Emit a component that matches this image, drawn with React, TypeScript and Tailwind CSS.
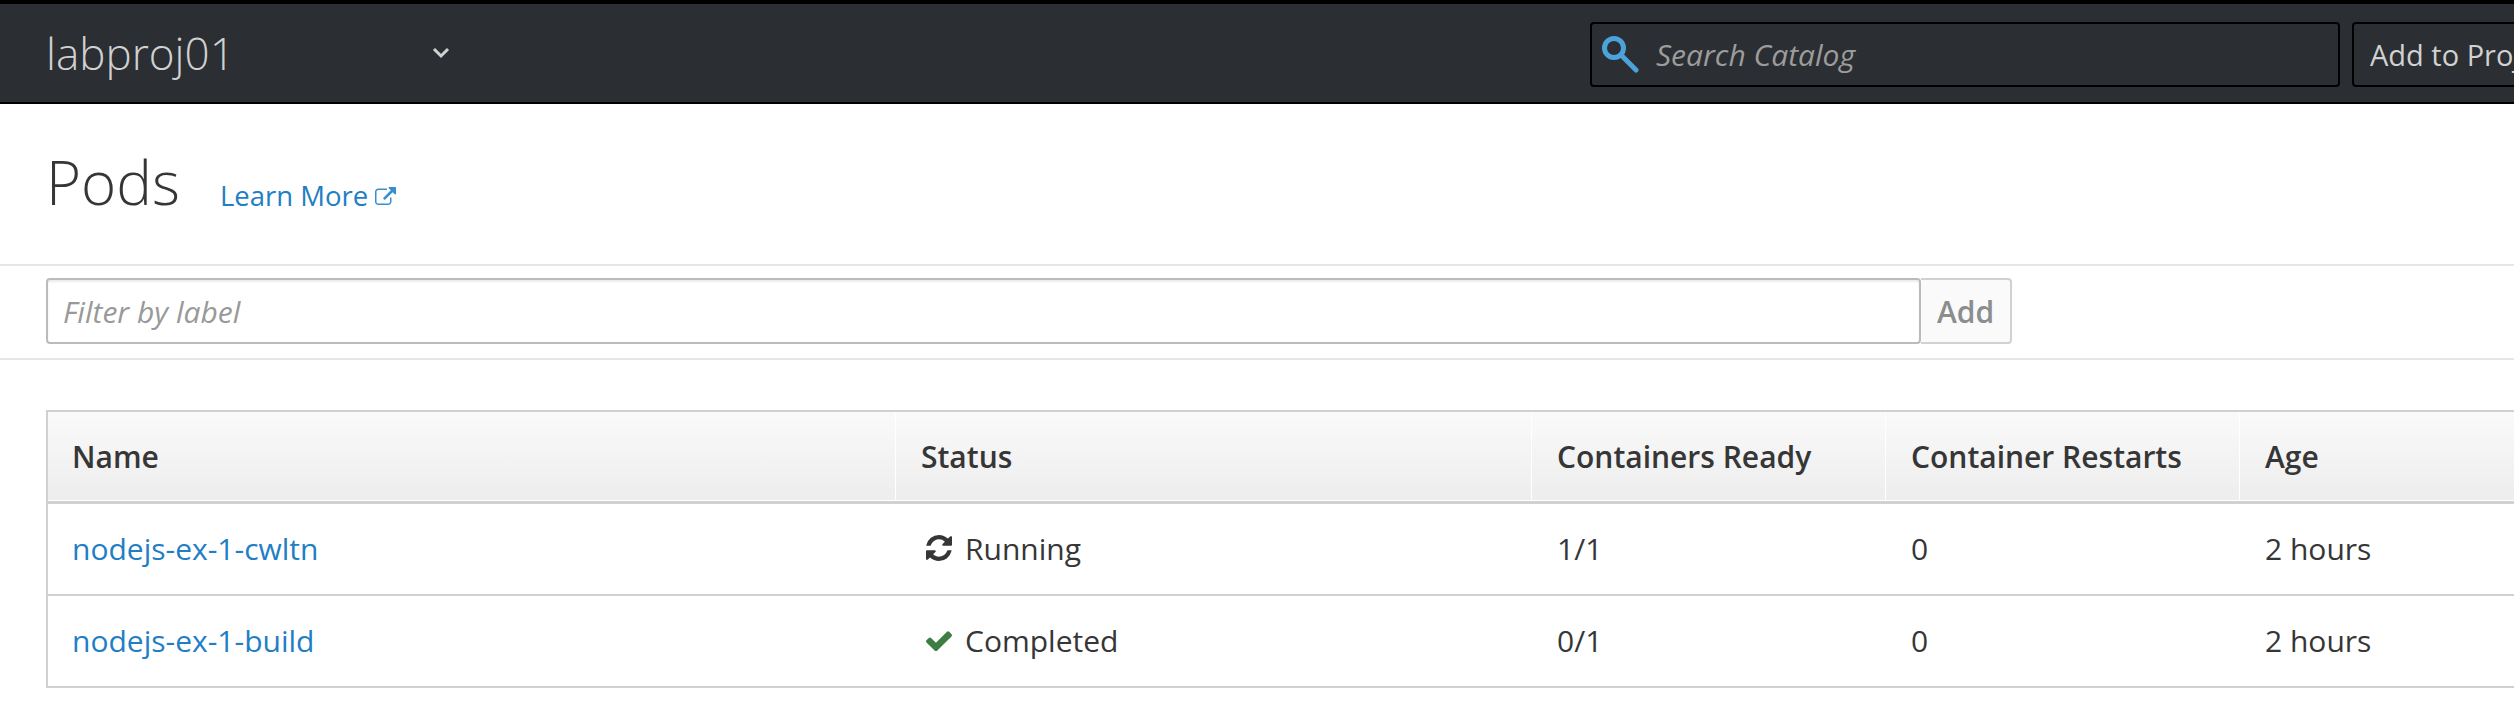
const pods = [
  { name: 'nodejs-ex-1-cwltn', status: 'Running', ready: '1/1', restarts: '0', age: '2 hours' },
  { name: 'nodejs-ex-1-build', status: 'Completed', ready: '0/1', restarts: '0', age: '2 hours' },
];

function HeaderCell({ label, first }: { label: string; first?: boolean }) {
  return (
    <div className={`flex items-center ${first ? 'pl-[24px]' : 'border-l border-white pl-[25px]'}`}>
      <span className="whitespace-nowrap text-[30px] font-semibold text-[#363636]">{label}</span>
    </div>
  );
}

function RefreshIcon() {
  return (
    <svg viewBox="0 0 1536 1536" className="mr-[13px] h-[26px] w-[26px] fill-[#363636]">
      <path d="M1511 928q0 5-1 7-64 268-268 434.5t-478 166.5q-146 0-282.5-55t-243.5-157l-129 129q-19 19-45 19t-45-19-19-45v-448q0-26 19-45t45-19h448q26 0 45 19t19 45-19 45l-137 137q71 66 161 102t187 36q134 0 250-65t186-179q11-17 53-117 8-23 30-23h192q13 0 22.5 9.5t9.5 22.5zm25-800v448q0 26-19 45t-45 19h-448q-26 0-45-19t-19-45 19-45l138-138q-148-137-349-137-134 0-250 65t-186 179q-11 17-53 117-8 23-30 23h-199q-13 0-22.5-9.5t-9.5-22.5v-7q65-268 270-434.5t480-166.5q146 0 284 55.5t245 156.5l130-129q19-19 45-19t45 19 19 45z" />
    </svg>
  );
}

function CheckIcon() {
  return (
    <svg viewBox="121 262 1550 1232" className="mr-[13px] h-[21px] w-[26px] fill-[#3f7d42]">
      <path d="M1671 566q0 40-28 68l-724 724-136 136q-28 28-68 28t-68-28l-136-136-362-362q-28-28-28-68t28-68l136-136q28-28 68-28t68 28l294 295 656-657q28-28 68-28t68 28l136 136q28 28 28 68z" />
    </svg>
  );
}

function ExternalIcon() {
  return (
    <svg viewBox="0 0 1792 1536" className="ml-[7px] h-[18px] w-[21px] fill-[#398fcd]">
      <path d="M1408 928v320q0 119-84.5 203.5t-203.5 84.5h-832q-119 0-203.5-84.5t-84.5-203.5v-832q0-119 84.5-203.5t203.5-84.5h704q14 0 23 9t9 23v64q0 14-9 23t-23 9h-704q-66 0-113 47t-47 113v832q0 66 47 113t113 47h832q66 0 113-47t47-113v-320q0-14 9-23t23-9h64q14 0 23 9t9 23zm384-864v512q0 26-19 45t-45 19-45-19l-176-176-652 652q-10 10-23 10t-23-10l-114-114q-10-10-10-23t10-23l652-652-176-176q-19-19-19-45t19-45 45-19h512q26 0 45 19t19 45z" />
    </svg>
  );
}

function SearchIcon() {
  return (
    <svg viewBox="0 0 37 37" className="h-[37px] w-[37px] fill-none stroke-[#4ca3dc] stroke-[5px]">
      <circle cx="12" cy="12" r="9.5" />
      <path d="M20 20L34 34" strokeLinecap="round" />
    </svg>
  );
}

function ChevronIcon() {
  return (
    <svg viewBox="0 0 18 12" className="ml-[4px] h-[12px] w-[18px] fill-none stroke-[#d1d1d1] stroke-[3px]">
      <path d="M2 2L9 9L16 2" />
    </svg>
  );
}

export default function App() {
  return (
    <div
      className="h-[710px] w-full overflow-hidden bg-white text-[30px] text-[#363636]"
      style={{ fontFamily: '"Open Sans", "Liberation Sans", sans-serif' }}
    >
      {/* top bar */}
      <div className="flex h-[104px] items-center border-t-4 border-b-2 border-t-black border-b-black bg-[#2b2e33]">
        <div className="flex w-[1590px] shrink-0 items-center pl-[46px]">
          <span className="w-[382px] text-[44px] font-light leading-none text-[#d1d1d1]">labproj01</span>
          <ChevronIcon />
        </div>
        <div className="mt-[3px] flex h-[65px] w-[750px] shrink-0 items-center rounded-sm border-2 border-black pl-[10px]">
          <SearchIcon />
          <span className="ml-[17px] text-[30px] italic text-[#9c9c9c]">Search Catalog</span>
        </div>
        <div className="ml-[12px] mt-[3px] flex h-[65px] w-[300px] shrink-0 items-center rounded-sm border-2 border-black pl-[16px]">
          <span className="whitespace-nowrap text-[29px] text-[#d1d1d1]">Add to Project</span>
        </div>
      </div>

      {/* title */}
      <div className="flex h-[160px] items-center pl-[46px]">
        <h1 className="mb-[4px] text-[60px] font-light leading-none text-[#363636]">Pods</h1>
        <a className="ml-[40px] mt-[24px] flex items-center text-[27.5px] text-[#1f7ec4]">
          Learn More
          <ExternalIcon />
        </a>
      </div>

      {/* filter */}
      <div className="flex h-[96px] items-center border-y-2 border-[#e6e6e6] pb-[2px] pl-[46px]">
        <div className="flex h-[66px] w-[1875px] items-center rounded-sm border-2 border-[#bbbbbb] pl-[15px] shadow-[inset_0_2px_2px_rgba(0,0,0,0.08)]">
          <span className="text-[30px] italic text-[#999999]">Filter by label</span>
        </div>
        <div className="flex h-[66px] w-[91px] items-center justify-center rounded-r-sm border-2 border-l-0 border-[#d1d1d1] bg-[#fafafa]">
          <span className="text-[30px] font-semibold text-[#8b8d8f]">Add</span>
        </div>
      </div>

      {/* table */}
      <div className="ml-[46px] mt-[50px] w-[2600px] border-2 border-b-0 border-[#d1d1d1]">
        <div className="grid h-[92px] grid-cols-[847px_636px_354px_354px_1fr] border-b-[3px] border-b-[#d1d1d1] bg-gradient-to-b from-[#fafafa] to-[#ededed] shadow-[inset_0_-1px_0_#ffffff]">
          <HeaderCell label="Name" first />
          <HeaderCell label="Status" />
          <HeaderCell label="Containers Ready" />
          <HeaderCell label="Container Restarts" />
          <HeaderCell label="Age" />
        </div>
        {pods.map((pod) => (
          <div key={pod.name} className="grid h-[92px] grid-cols-[847px_636px_354px_354px_1fr] border-b-2 border-[#d1d1d1] pb-[2px]">
            <div className="flex items-center pl-[24px]">
              <a className="text-[#1f7ec4]">{pod.name}</a>
            </div>
            <div className="flex items-center pl-[31px]">
              {pod.status === 'Running' ? <RefreshIcon /> : <CheckIcon />}
              {pod.status}
            </div>
            <div className="flex items-center pl-[26px]">{pod.ready}</div>
            <div className="flex items-center pl-[26px]">{pod.restarts}</div>
            <div className="flex items-center pl-[26px]">{pod.age}</div>
          </div>
        ))}
      </div>
    </div>
  );
}
